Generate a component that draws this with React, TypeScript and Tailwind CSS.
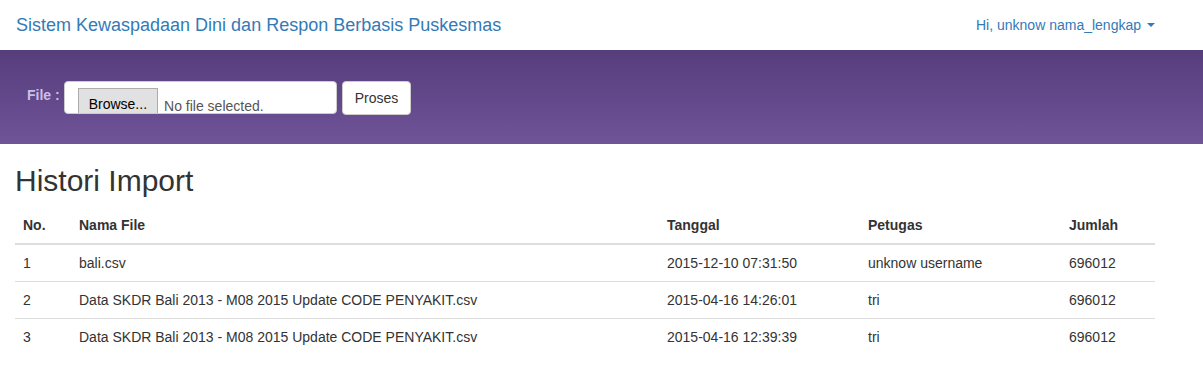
const rows = [
  { no: 1, file: "bali.csv", date: "2015-12-10 07:31:50", by: "unknow username", total: "696012" },
  { no: 2, file: "Data SKDR Bali 2013 - M08 2015 Update CODE PENYAKIT.csv", date: "2015-04-16 14:26:01", by: "tri", total: "696012" },
  { no: 3, file: "Data SKDR Bali 2013 - M08 2015 Update CODE PENYAKIT.csv", date: "2015-04-16 12:39:39", by: "tri", total: "696012" },
];

export default function App() {
  return (
    <div className="min-h-[384px] bg-white text-[14px] text-[#333] font-['Liberation_Sans',Arial,sans-serif]">
      {/* navbar */}
      <div className="h-[50px] flex items-center justify-between pl-[16px] pr-[48px]">
        <a className="text-[18px] text-[#337ab7] leading-[20px]">Sistem Kewaspadaan Dini dan Respon Berbasis Puskesmas</a>
        <a className="text-[#337ab7] leading-[20px] flex items-center">
          Hi, unknow nama_lengkap
          <span className="ml-[6px] w-0 h-0 border-x-[4px] border-x-transparent border-t-[4px] border-t-[#337ab7]" />
        </a>
      </div>

      {/* jumbotron */}
      <div className="h-[94px] bg-[linear-gradient(to_bottom,#563d7c,#6f5499)] flex items-center pl-[27px]">
        <div className="flex items-center mt-[1px]">
          <label className="font-bold text-[#cdbfe3] mr-[4px] mt-[-4px]">File :</label>
          <div className="w-[273px] h-[33px] bg-white border border-[#ccc] rounded-[4px] overflow-hidden flex items-start pl-[13px] pt-[6px]">
            <span className="h-[30px] px-[10px] pt-[6px] bg-[#e1e1e1] border border-[#adadad] text-[14px] text-black leading-[18px]">Browse...</span>
            <span className="ml-[6px] mt-[8px] text-[#555] leading-[20px]">No file selected.</span>
          </div>
          <button className="ml-[5px] h-[34px] px-[12px] bg-white border border-[#ccc] rounded-[4px] text-[#333] leading-[20px]">Proses</button>
        </div>
      </div>

      {/* content */}
      <div className="px-[15px]">
        <h2 className="text-[30px] leading-[33px] font-medium mt-[20px] mb-[10px]">Histori Import</h2>
        <table className="w-[1140px] border-collapse">
          <thead>
            <tr className="border-b-2 border-[#ddd] text-left">
              <th className="w-[56px] p-[8px] leading-[20px] font-bold">No.</th>
              <th className="w-[588px] p-[8px] leading-[20px] font-bold">Nama File</th>
              <th className="w-[201px] p-[8px] leading-[20px] font-bold">Tanggal</th>
              <th className="w-[201px] p-[8px] leading-[20px] font-bold">Petugas</th>
              <th className="p-[8px] leading-[20px] font-bold">Jumlah</th>
            </tr>
          </thead>
          <tbody>
            {rows.map((r, i) => (
              <tr key={r.no} className={i > 0 ? "border-t border-[#ddd]" : ""}>
                <td className="p-[8px] leading-[20px]">{r.no}</td>
                <td className="p-[8px] leading-[20px]">{r.file}</td>
                <td className="p-[8px] leading-[20px]">{r.date}</td>
                <td className="p-[8px] leading-[20px]">{r.by}</td>
                <td className="p-[8px] leading-[20px]">{r.total}</td>
              </tr>
            ))}
          </tbody>
        </table>
      </div>
    </div>
  );
}
